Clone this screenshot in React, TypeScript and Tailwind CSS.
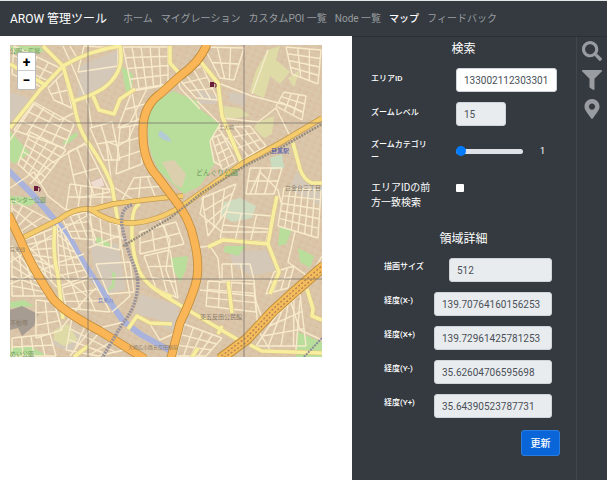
import React from 'react';
import { FaFilter, FaMapMarkerAlt, FaSearch } from 'react-icons/fa';

type Point = [number, number];

// four corners (clockwise), then how many streets run each way
interface Block { corners: [Point, Point, Point, Point]; cols: number; rows: number }

const blocks: Block[] = [
  { corners: [[14, 46], [60, 68], [44, 88], [12, 74]], cols: 4, rows: 3 },
  { corners: [[84, 46], [118, 48], [118, 66], [78, 72]], cols: 1, rows: 1 },
  { corners: [[123, 47], [168, 47], [168, 84], [132, 90]], cols: 5, rows: 4 },
  { corners: [[132, 91], [162, 86], [142, 118], [118, 128]], cols: 2, rows: 2 },
  { corners: [[48, 88], [64, 72], [72, 108], [54, 100]], cols: 2, rows: 2 },
  { corners: [[34, 102], [74, 124], [64, 148], [14, 130]], cols: 4, rows: 3 },
  { corners: [[30, 132], [66, 150], [40, 184], [18, 164]], cols: 4, rows: 5 },
  { corners: [[68, 152], [86, 144], [110, 192], [78, 198]], cols: 2, rows: 2 },
  { corners: [[90, 128], [112, 122], [120, 160], [104, 160]], cols: 2, rows: 2 },
  { corners: [[120, 128], [140, 124], [142, 164], [116, 174]], cols: 2, rows: 3 },
  { corners: [[176, 76], [202, 66], [218, 100], [196, 98]], cols: 3, rows: 3 },
  { corners: [[204, 47], [244, 48], [234, 80], [220, 78]], cols: 3, rows: 2 },
  { corners: [[286, 47], [321, 50], [318, 84], [292, 74]], cols: 3, rows: 4 },
  { corners: [[284, 92], [306, 96], [302, 120], [276, 106]], cols: 3, rows: 3 },
  { corners: [[218, 128], [250, 126], [266, 146], [242, 160]], cols: 4, rows: 3 },
  { corners: [[212, 138], [222, 134], [236, 162], [222, 170]], cols: 2, rows: 4 },
  { corners: [[250, 168], [282, 168], [274, 194], [246, 194]], cols: 3, rows: 2 },
  { corners: [[284, 188], [321, 190], [318, 238], [278, 226]], cols: 6, rows: 5 },
  { corners: [[202, 198], [236, 184], [226, 212], [208, 236]], cols: 3, rows: 3 },
  { corners: [[226, 212], [272, 216], [266, 242], [220, 238]], cols: 3, rows: 2 },
  { corners: [[208, 281], [254, 284], [256, 312], [206, 306]], cols: 4, rows: 3 },
  { corners: [[222, 264], [250, 264], [254, 280], [222, 280]], cols: 3, rows: 1 },
  { corners: [[274, 272], [294, 266], [288, 288], [266, 294]], cols: 3, rows: 2 },
  { corners: [[276, 316], [300, 294], [306, 346], [256, 346]], cols: 4, rows: 3 },
  { corners: [[184, 324], [222, 338], [206, 356], [176, 356]], cols: 4, rows: 3 },
  { corners: [[12, 200], [54, 222], [24, 236], [12, 216]], cols: 4, rows: 2 },
  { corners: [[24, 240], [54, 228], [58, 288], [40, 270]], cols: 3, rows: 6 },
  { corners: [[57, 224], [68, 240], [88, 276], [60, 286]], cols: 3, rows: 6 },
  { corners: [[62, 288], [92, 278], [110, 312], [66, 308]], cols: 3, rows: 3 },
  { corners: [[62, 218], [86, 212], [96, 240], [72, 238]], cols: 3, rows: 3 },
  { corners: [[90, 214], [120, 226], [120, 250], [94, 244]], cols: 3, rows: 2 },
  { corners: [[70, 184], [114, 190], [114, 204], [66, 210]], cols: 4, rows: 2 },
  { corners: [[12, 246], [34, 274], [46, 296], [12, 296]], cols: 3, rows: 5 },
  { corners: [[36, 300], [54, 302], [62, 330], [36, 338]], cols: 2, rows: 3 },
  { corners: [[72, 318], [124, 350], [98, 356], [66, 350]], cols: 4, rows: 3 },
  { corners: [[12, 338], [50, 334], [56, 356], [12, 356]], cols: 4, rows: 2 },
  { corners: [[140, 232], [176, 222], [184, 244], [140, 254]], cols: 3, rows: 2 },
  { corners: [[144, 256], [170, 250], [178, 298], [156, 288]], cols: 2, rows: 3 },
  { corners: [[134, 178], [154, 176], [172, 196], [122, 200]], cols: 3, rows: 2 },
  { corners: [[96, 264], [130, 262], [134, 292], [108, 294]], cols: 1, rows: 2 },
];

const lerp = (a: Point, b: Point, t: number): Point => [a[0] + (b[0] - a[0]) * t, a[1] + (b[1] - a[1]) * t];

const blockPath = ({ corners, cols, rows }: Block) => {
  const [a, b, c, d] = corners;
  const parts: string[] = [];
  for (let i = 0; i <= cols; i++) {
    parts.push(`M${lerp(a, b, i / cols)}L${lerp(d, c, i / cols)}`);
  }
  for (let i = 0; i <= rows; i++) {
    parts.push(`M${lerp(a, d, i / rows)}L${lerp(b, c, i / rows)}`);
  }
  return parts.join('');
};

const lanes = [
  'M63 46L74 70L88 104L92 128',
  'M70 46L77 58',
  'M10 140L34 104L60 120L76 112',
  'M88 141L70 152L50 164L30 184',
  'M132 92L137 120L128 140L118 146L106 141L112 186L134 200',
  'M137 90L168 84',
  'M200 109L180 88L178 80',
  'M218 83L252 96L290 106L302 112',
  'M252 94L268 50',
  'M222 118L258 122L276 108L292 140',
  'M210 141L214 162L222 166',
  'M197 101L220 124L210 141',
  'M250 194L260 172L278 190L282 206',
  'M204 196L200 214L222 232L268 232',
  'M193 248L210 246L218 258L220 280',
  'M160 220L170 240L166 270L176 296',
  'M200 290L254 296L262 318',
  'M295 232L288 262L310 278L322 256',
  'M254 280L258 330L270 350',
  'M290 300L300 330L322 340',
  'M300 300L296 350',
  'M88 248L118 236L132 244',
  'M118 226L124 262L130 296L112 312',
  'M20 240L62 276L92 300',
  'M10 262L54 234L90 214',
  'M10 284L60 262L84 254',
  'M60 330L84 300L96 288',
  'M70 356L90 330L124 322',
  'M10 188L34 172L48 196L66 210',
  'M150 324L160 340L182 330',
];

const yellowRoads = [
  'M10 128L40 90L63 66Q90 50 121 46',
  'M43 46L63 66L74 104Q78 128 87 141Q106 168 112 186L118 222',
  'M120 46Q124 66 113 79Q104 92 74 101',
  'M93 96L99 110L114 114L120 99L135 89',
  'M10 64L47 86',
  'M170 46L170 63L180 74',
  'M200 61L218 83L222 116L242 164',
  'M293 143L300 169Q304 180 312 183L322 183',
  'M55 226Q52 252 58 276L63 319',
  'M140 204Q131 206 132 236Q134 268 145 280Q155 292 172 297',
  'M160 293L193 313L240 341',
  'M128 329L137 316L150 323L172 324',
  'M208 247L223 240L268 244L273 216L277 196',
  'M268 244L279 272L270 294',
  'M228 281L232 313',
  'M307 289L313 309L312 316L322 320',
  'M250 345L262 351L322 353',
  'M222 326L218 334M198 348L192 357M88 346L74 357',
];

const orangeRoads = [
  'M183 196Q140 200 113 204L90 210',
  'M20 239L60 219Q74 208 90 209Q108 222 127 223Q154 224 185 204L243 163L280 143L322 118',
];

const wideRoads = [
  'M207 44Q200 62 180 76L160 94Q143 106 143 130Q142 160 157 176L172 196Q190 218 194 240Q201 268 195 286Q190 302 180 323L171 358',
  'M8 214L20 239Q32 268 53 299Q64 312 100 331L145 359',
];

const greens = [
  'M148 120Q146 106 160 99L173 91L197 101L200 109L220 124L210 141L215 163L200 186L184 194L160 172Q146 152 148 120Z',
  'M10 131L30 153L14 164L10 160Z',
  'M121 66L133 74L132 90L126 92Z',
  'M10 196L42 198L30 206L10 204Z',
  'M10 46L40 46L44 52L14 54Z',
  'M62 142L76 132L78 136L66 145Z',
  'M94 236L98 246L112 246L106 240Z',
  'M104 266L112 272L112 284L106 292L114 288L116 274Z',
  'M170 258L188 256L186 270L180 282L172 268Z',
  'M225 246L246 246L238 256L224 252Z',
  'M280 226L292 230L286 244L278 246Z',
  'M298 248L314 256L310 268L300 262Z',
  'M298 332L322 342L322 357L296 357Z',
  'M10 302L24 300L34 306L10 308Z',
  'M10 348L30 346L44 354L40 357L10 357Z',
];

const pales = [
  'M256 70L268 50L280 46L276 60L290 72L280 84L270 76L264 98L250 92Z',
  'M258 122L274 116L272 134L264 138L254 128Z',
  'M222 106L240 108L250 116L224 120Z',
  'M288 78L300 70L294 88Z',
  'M54 330L68 324L78 340L64 346L54 340Z',
];

const greys = [
  'M10 92L34 100L10 126Z',
  'M80 66L118 50L118 72L98 90L78 98Z',
  'M140 294L180 306L172 322L134 314Z',
  'M196 88L216 96L216 104L200 104Z',
  'M228 92L246 94L244 106L230 102Z',
  'M90 240L118 244L126 290L108 294L94 268Z',
  'M230 252L266 250L276 270L252 276L232 264Z',
  'M296 172L322 188L322 206L290 190Z',
  'M60 326L84 336L70 352L52 344Z',
  'M160 304L190 318L182 334L160 326Z',
];

const river = 'M8 170L33 195Q48 212 60 226L72 242Q80 258 92 276L110 302L123 321L140 334L174 353';
const loopLine = 'M132 205Q120 208 122 226Q126 246 133 263Q140 280 137 293Q134 310 123 323L102 358';
const mainLine = 'M123 246L170 218L203 192L243 167L282 147L322 124';

function StreetMap() {
  return (
    <svg viewBox="10 45 312 312" className="block h-full w-full" role="img" aria-label="地図">
      <defs>
        <pattern id="houses" width="7" height="6" patternUnits="userSpaceOnUse" patternTransform="rotate(24)">
          <rect width="7" height="6" fill="#dbc5a8" />
          <rect x="1" y="1" width="3" height="2" fill="#d8bfa2" />
          <rect x="4" y="4" width="2" height="2" fill="#d9cab2" />
        </pattern>
      </defs>
      <rect x="10" y="45" width="312" height="312" fill="url(#houses)" />
      {greys.map((d) => <path key={d} d={d} fill="#d4c8b8" />)}
      {pales.map((d) => <path key={d} d={d} fill="#dedba6" />)}
      {greens.map((d) => <path key={d} d={d} fill="#b9dd9a" />)}
      <path d="M162 162L174 160L186 174L182 188L174 184Z" fill="#dccfae" />
      <path d="M160 130L168 136L172 142L164 140L158 136Z" fill="#b3cbd4" />
      <path d="M10 310L22 306L38 314L34 326L22 336L18 328L10 330Z" fill="#a69c92" />
      <path d="M224 202L240 198L256 206L252 218L232 222L220 214Z" fill="#cfdcc0" />
      <path d="M270 158L282 154L284 168L272 170Z" fill="#c9dcc0" />
      <path d="M90 182L102 177L105 186L94 189Z" fill="#efdcd0" stroke="#d8b9a8" />

      <path d={river} fill="none" stroke="#aab3dc" strokeWidth="6" />
      <g fill="none" stroke="#f8ebcb" strokeWidth="1.4">
        {blocks.map((b, i) => <path key={i} d={blockPath(b)} />)}
        {lanes.map((d) => <path key={d} d={d} />)}
      </g>
      <g fill="none" strokeLinejoin="round">
        {yellowRoads.map((d) => <path key={d} d={d} stroke="#dcc685" strokeWidth="4.6" />)}
        {yellowRoads.map((d) => <path key={d} d={d} stroke="#f8ee9f" strokeWidth="3.6" />)}
        {orangeRoads.map((d) => <path key={d} d={d} stroke="#c39a4e" strokeWidth="5.6" />)}
        {orangeRoads.map((d) => <path key={d} d={d} stroke="#f5cb6c" strokeWidth="4.2" />)}
        {wideRoads.map((d) => <path key={d} d={d} stroke="#bd8b3a" strokeWidth="9" />)}
        {wideRoads.map((d) => <path key={d} d={d} stroke="#f9b556" strokeWidth="7.4" />)}
        <path d="M324 266L293 293L273 311L247 339L220 359" stroke="#c1903f" strokeWidth="11" />
        <path d="M324 266L293 293L273 311L247 339L220 359" stroke="#f4bd5c" strokeWidth="9" />
        <path d="M324 264L293 291L273 309L247 337L220 357" stroke="#b98150" strokeWidth="1.4" strokeDasharray="2 2" />
        <path d="M324 269L293 296L273 314L247 342L222 359" stroke="#b98150" strokeWidth="1.4" strokeDasharray="2 2" />
        <path d={loopLine} stroke="#99939a" strokeWidth="3.4" strokeDasharray="2 1" />
        <path d={mainLine} stroke="#978d7c" strokeWidth="2.4" strokeDasharray="2 1" />
        <path d="M304 357L322 338" stroke="#8a8a98" strokeWidth="2" strokeDasharray="2 1" />
      </g>

      <path d="M88 45V357M244 45V357M10 123H322M10 279H322" stroke="#6f6a66" strokeOpacity=".7" strokeWidth="1" />

      {([[210, 82], [34, 186]] as Point[]).map(([x, y]) => (
        <g key={x} fill="#6b1f3a">
          <path d={`M${x} ${y}h4v5h-4z`} />
          <path d={`M${x + 4} ${y + 1}l2 1v3h-1`} fill="none" stroke="#6b1f3a" />
        </g>
      ))}

      <g className="font-['Noto_Sans_CJK_JP',sans-serif]" fontSize="6" fill="#8a7b68">
        <text x="196" y="175" fontSize="7" fill="#6f9a5c">どんぐり公園</text>
        <text x="10" y="202" fill="#6f9a5c">センター公園</text>
        <text x="10" y="53" fill="#6f9a5c">公園・広場</text>
        <text x="10" y="356" fill="#6f9a5c">めい公園</text>
        <text x="98" y="302" fontSize="5" fill="#6a7cc0">目黒川</text>
        <text x="271" y="153" fill="#4a55b0">目黒駅</text>
        <text x="219" y="129" fontSize="5">上大崎</text>
        <text x="285" y="190">白金台三丁目</text>
        <text x="200" y="319">東五反田公民館</text>
        <text x="10" y="251" fontSize="5">目黒四</text>
        <text x="10" y="325">不動尊</text>
        <text x="128" y="349" fontSize="5">大崎広小路五反田駅前</text>
      </g>
    </svg>
  );
}

const navItems = ['ホーム', 'マイグレーション', 'カスタムPOI 一覧', 'Node 一覧', 'マップ', 'フィードバック'];

const details = [
  { id: 'min-x', label: '経度(X-)', value: '139.70764160156253' },
  { id: 'max-x', label: '経度(X+)', value: '139.72961425781253' },
  { id: 'min-y', label: '経度(Y-)', value: '35.62604706595698' },
  { id: 'max-y', label: '経度(Y+)', value: '35.64390523787731' },
];

const fieldClass = 'h-6 rounded-[3px] border border-[#ced4da] px-[7px] text-[10px] font-normal text-[#495057]';

export default function App() {
  const [areaId, setAreaId] = React.useState('133002112303301');
  const [category, setCategory] = React.useState(1);

  return (
    <div className="flex min-h-screen flex-col border-t border-[#e6e7e8] bg-white font-[Roboto,'Noto_Sans_CJK_JP',sans-serif] text-white">
      <nav className="flex h-[35px] items-center bg-[#343a40] px-2.5">
        <a href="#" className="mr-4 whitespace-nowrap text-[12px]">AROW 管理ツール</a>
        <ul className="flex gap-2 whitespace-nowrap text-[10px]">
          {navItems.map((item) => (
            <li key={item}>
              <a href="#" className={item === 'マップ' ? 'font-medium text-white' : 'text-[#999c9f]'}>{item}</a>
            </li>
          ))}
        </ul>
      </nav>

      <div className="flex flex-1">
        <main className="min-w-0 flex-1 pt-[9px] pr-[30px] pl-2.5">
          <div className="relative aspect-square w-full overflow-hidden bg-[#ddd]">
            <StreetMap />
            <div className="absolute top-[7px] left-[7px] flex w-[19px] flex-col overflow-hidden rounded-[2px] border border-[#bbb] bg-white text-black">
              <button aria-label="拡大" className="h-[18px] border-b border-[#ccc] text-[14px] leading-4 font-bold">+</button>
              <button aria-label="縮小" className="h-[18px] text-[14px] leading-4 font-bold">−</button>
            </div>
          </div>
        </main>

        <aside className="flex w-[255px] border-t border-[#2b3035] bg-[#343a40]">
          <div className="flex-1 pl-[19px]">
            <h2 className="pr-5 text-center text-[12px] leading-6">検索</h2>
            <div className="mt-[7px] grid grid-cols-[60px_1fr] gap-x-[25px] gap-y-2.5 text-[8px] leading-[13px] font-medium">
              <label htmlFor="area-id" className="pt-1">エリアID</label>
              <input id="area-id" className={`${fieldClass} w-[101px] bg-white`} value={areaId} onChange={(e) => setAreaId(e.target.value)} />

              <label htmlFor="zoom" className="pt-1">ズームレベル</label>
              <input id="zoom" className={`${fieldClass} w-[50px] bg-[#e9ecef]`} value="15" readOnly />

              <label htmlFor="category" className="pt-0.5">ズームカテゴリー</label>
              <div className="flex h-[30px] items-center">
                <input
                  id="category"
                  type="range"
                  min="1"
                  max="5"
                  value={category}
                  onChange={(e) => setCategory(Number(e.target.value))}
                  className="h-2.5 w-[67px] appearance-none bg-transparent [&::-webkit-slider-runnable-track]:h-[5px] [&::-webkit-slider-runnable-track]:rounded-full [&::-webkit-slider-runnable-track]:bg-[#dee2e6] [&::-webkit-slider-thumb]:-mt-[3px] [&::-webkit-slider-thumb]:size-[10px] [&::-webkit-slider-thumb]:appearance-none [&::-webkit-slider-thumb]:rounded-full [&::-webkit-slider-thumb]:bg-[#007bff]"
                />
                <output htmlFor="category" className="ml-[17px] text-[9px] font-normal">{category}</output>
              </div>

              <label htmlFor="prefix" className="pt-1 text-[10px] leading-[15px] font-normal">エリアIDの前方一致検索</label>
              <input id="prefix" type="checkbox" className="mt-2 size-2 appearance-none rounded-[1px] bg-white checked:bg-[#007bff]" />
            </div>

            <h2 className="mt-[17px] pr-5 text-center text-[12px] leading-6">領域詳細</h2>
            <div className="mt-[7px] flex flex-col gap-2.5 pr-6 pl-[13px] text-[8px] leading-[18px] font-medium">
              <div className="flex justify-between">
                <label htmlFor="size">描画サイズ</label>
                <input id="size" className={`${fieldClass} w-[103px] bg-[#e9ecef]`} value="512" readOnly />
              </div>
              {details.map(({ id, label, value }) => (
                <div key={id} className="flex justify-between">
                  <label htmlFor={id}>{label}</label>
                  <input id={id} className={`${fieldClass} w-[118px] bg-[#e9ecef]`} value={value} readOnly />
                </div>
              ))}
            </div>
            <div className="mt-3 flex justify-end pr-4">
              <button className="h-[26px] w-[39px] rounded-[3px] border border-[#2a7de0] bg-[#0a66d8] text-[10px] font-medium">更新</button>
            </div>
          </div>

          <div className="flex w-[31px] flex-col items-center gap-[9px] border-l border-[#42474d] pt-1 text-[#999ca0]">
            <button aria-label="検索"><FaSearch size={20} /></button>
            <button aria-label="絞り込み"><FaFilter size={20} /></button>
            <button aria-label="位置"><FaMapMarkerAlt size={20} /></button>
          </div>
        </aside>
      </div>
    </div>
  );
}
